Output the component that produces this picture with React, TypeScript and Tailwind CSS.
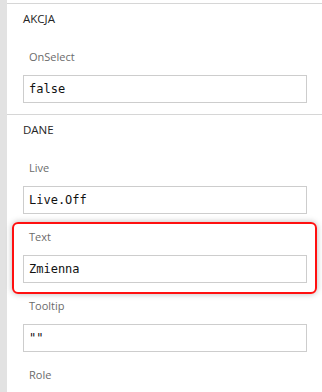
const sans = { fontFamily: '"Open Sans", "Noto Sans", sans-serif' };

type Prop = { label: string; value?: string; highlight?: boolean };

const sections: { title: string; props: Prop[] }[] = [
  { title: 'AKCJA', props: [{ label: 'OnSelect', value: 'false' }] },
  {
    title: 'DANE',
    props: [
      { label: 'Live', value: 'Live.Off' },
      { label: 'Text', value: 'Zmienna', highlight: true },
      { label: 'Tooltip', value: '""' },
      { label: 'Role' },
    ],
  },
];

function Property({ label, value, highlight }: Prop) {
  return (
    <div className="relative pt-[7px] pb-[8px]">
      {highlight && (
        <div className="pointer-events-none absolute left-[5px] right-[5px] top-0 bottom-[-3px] rounded-[6px] border-2 border-[#ff1010] shadow-[0_0_6px_rgba(0,0,0,0.28)]" />
      )}
      <div className="pl-[22px] h-4 leading-4 text-[11px] text-[#6b6b6b]">{label}</div>
      {value !== undefined && (
        <div className="mt-[10px] ml-4 mr-[15px] h-7 border border-[#cdcdcd] bg-white flex items-center pl-[5px]">
          <span className="text-[12px] text-[#111]" style={{ fontFamily: '"DejaVu Sans Mono", "Liberation Mono", monospace' }}>
            {value}
          </span>
        </div>
      )}
    </div>
  );
}

export default function App() {
  return (
    <div className="w-[322px] h-[392px] flex overflow-hidden bg-white" style={sans}>
      {/* lewy pasek */}
      <div className="w-[7px] shrink-0 bg-[#e2e2e2]" />

      <div className="flex-1">
        <div className="h-[3px]" />
        {sections.map((s) => (
          <section key={s.title} className="border-t border-[#d6d6d6] pb-[3px]">
            <div className="pl-4 pt-[7px] pb-[15px] h-4 leading-4 box-content text-[11.5px] text-[#252525]">
              {s.title}
            </div>
            {s.props.map((p) => (
              <Property key={p.label} {...p} />
            ))}
          </section>
        ))}
      </div>
    </div>
  );
}
